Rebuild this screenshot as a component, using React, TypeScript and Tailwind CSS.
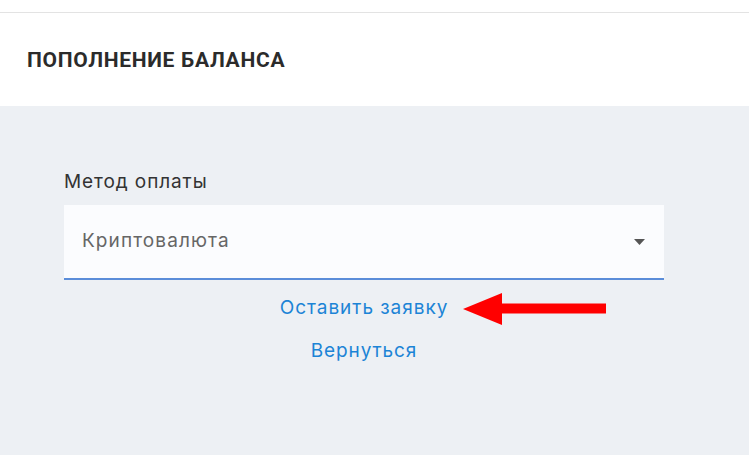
import React from "react";

export default function App() {
  return (
    <div className="w-[749px] h-[455px] bg-[#edf0f4] overflow-hidden" style={{ fontFamily: "Inter, 'Noto Sans', sans-serif" }}>
      <div className="h-[13px] bg-white border-b border-[#e3e3e3]" />
      <div className="h-[93px] bg-white flex items-center pl-[27px]">
        <h1 className="text-[21px] font-bold text-[#2b2b2b] tracking-[0.7px] [font-family:'Roboto','Liberation_Sans',sans-serif] whitespace-nowrap pt-[2px]">
          ПОПОЛНЕНИЕ БАЛАНСА
        </h1>
      </div>
      <div className="pl-[64px] pt-[64px] w-[664px] box-content">
        <div className="text-[19px] leading-[24px] text-[#333] tracking-[0.9px] mb-[11px]">Метод оплаты</div>
        <div className="w-[600px] h-[75px] bg-[#fbfcfe] border-b-2 border-[#5b8dd9] flex items-center justify-between pl-[18px] pr-[19px]">
          <span className="text-[19px] text-[#666] tracking-[1.1px]">Криптовалюта</span>
          <svg width="11" height="6" viewBox="0 0 11 6"><path d="M0 0 H11 L5.5 6 Z" fill="#555" /></svg>
        </div>
        <div className="w-[600px] flex flex-col items-center pt-[16px]">
          <div className="relative">
            <a className="text-[19px] leading-[24px] text-[#1c84d6] tracking-[0.95px]">Оставить заявку</a>
            <svg className="absolute left-[calc(100%+15px)] top-[-3px]" width="145" height="33" viewBox="0 0 145 33">
              <path d="M0 16 L39 0 L39 10.5 L143 10.5 L143 20.5 L39 20.5 L39 32 Z" fill="#ff0000" />
            </svg>
          </div>
          <a className="mt-[19px] text-[19px] leading-[24px] text-[#1c84d6] tracking-[0.9px]">Вернуться</a>
        </div>
      </div>
    </div>
  );
}
